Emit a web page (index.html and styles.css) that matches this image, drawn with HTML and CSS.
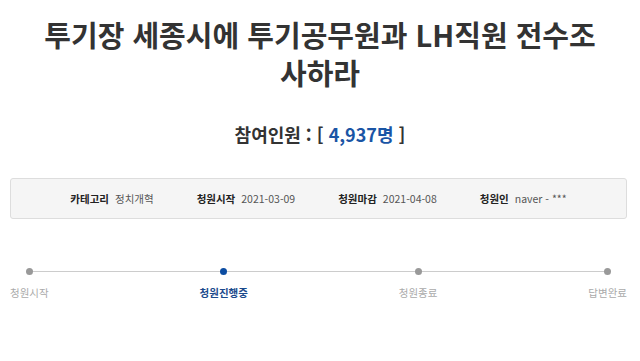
FILE: index.html
```html
<!DOCTYPE html>
<html lang="ko">
<head>
  <meta charset="UTF-8">
  <meta name="viewport" content="width=device-width, initial-scale=1.0">
  <title>청원 상세</title>
  <link rel="stylesheet" href="styles.css">
</head>
<body>
  <div class="petition">
    <h1 class="petition-title">투기장 세종시에 투기공무원과 LH직원 전수조<br>사하라</h1>

    <p class="petition-count">참여인원 : [ <span class="count-num">4,937명</span> ]</p>

    <!-- 청원 정보 -->
    <ul class="petition-info">
      <li><strong>카테고리</strong><span>정치개혁</span></li>
      <li><strong>청원시작</strong><span>2021-03-09</span></li>
      <li><strong>청원마감</strong><span>2021-04-08</span></li>
      <li><strong>청원인</strong><span>naver - ***</span></li>
    </ul>

    <!-- 진행 단계 -->
    <ol class="steps">
      <li class="step"><span class="dot"></span><span class="step-label">청원시작</span></li>
      <li class="step active"><span class="dot"></span><span class="step-label">청원진행중</span></li>
      <li class="step"><span class="dot"></span><span class="step-label">청원종료</span></li>
      <li class="step"><span class="dot"></span><span class="step-label">답변완료</span></li>
    </ol>
  </div>
</body>
</html>
```

FILE: styles.css
```css
    body {
      font-family: "Noto Sans CJK KR", "Noto Sans", sans-serif;
      background-color: #ffffff;
      color: #333333;
      margin: 0;
      padding: 0;
    }
    .petition {
      width: 640px;
    }
    .petition-title {
      margin: 0;
      padding-top: 15px;
      font-size: 29px;
      line-height: 38px;
      font-weight: 700;
      text-align: center;
      color: #333333;
    }
    .petition-count {
      margin: 31px 0 0;
      font-size: 18px;
      line-height: 24px;
      font-weight: 700;
      text-align: center;
      color: #333333;
    }
    .count-num {
      color: #1a55a5;
    }
    .petition-info {
      list-style: none;
      margin: 32px 13px 0 10px;
      padding: 0;
      height: 39px;
      display: flex;
      justify-content: center;
      align-items: center;
      gap: 43px;
      background-color: #f5f5f5;
      border: 1px solid #dddddd;
      border-radius: 3px;
      font-size: 10.5px;
    }
    .petition-info li {
      display: flex;
      gap: 6px;
    }
    .petition-info strong {
      color: #222222;
    }
    .petition-info span {
      color: #555555;
    }
    .steps {
      position: relative;
      list-style: none;
      margin: 49px 13px 0 10px;
      padding: 0;
      display: flex;
      justify-content: space-between;
    }
    .steps:before {
      content: "";
      position: absolute;
      top: 3px;
      left: 20px;
      right: 21px;
      height: 1px;
      background-color: #cccccc;
    }
    .step {
      position: relative;
      display: flex;
      flex-direction: column;
      align-items: center;
    }
    .dot {
      width: 7px;
      height: 7px;
      border-radius: 50%;
      background-color: #999999;
    }
    .step-label {
      margin-top: 11px;
      font-size: 10.5px;
      line-height: 14px;
      color: #aaaaaa;
    }
    .step.active .dot {
      background-color: #0c4da2;
    }
    .step.active .step-label {
      color: #1b4a8c;
      font-weight: 700;
    }
```
